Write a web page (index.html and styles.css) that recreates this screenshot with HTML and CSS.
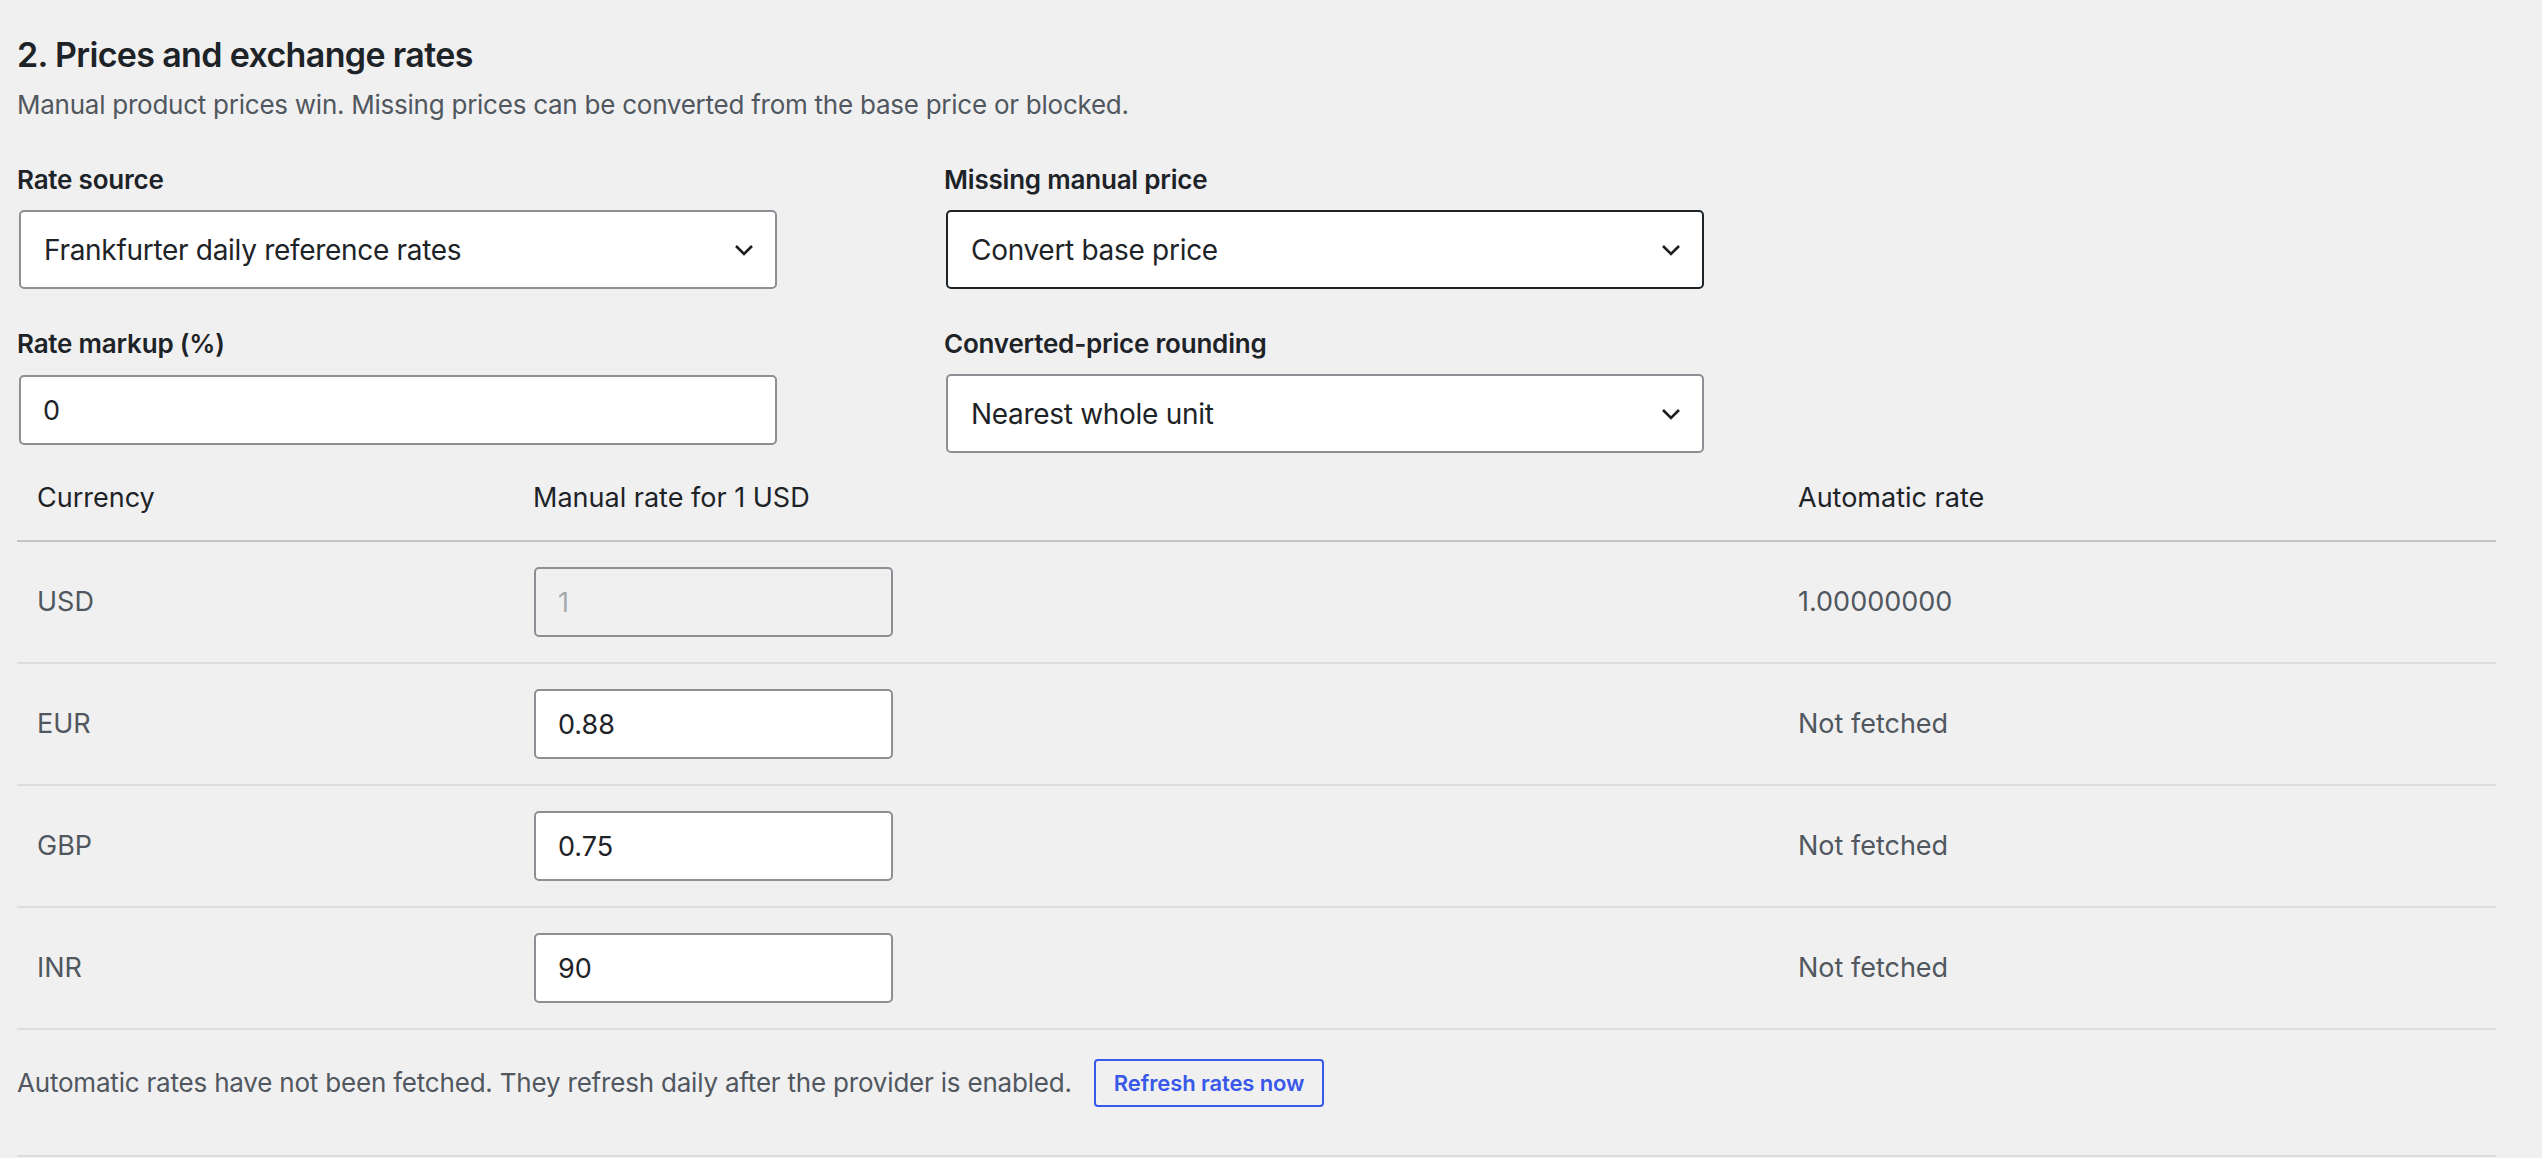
FILE: index.html
```html
<!DOCTYPE html>
<html lang="en">
<head>
<meta charset="utf-8">
<title>Prices and exchange rates</title>
<link rel="stylesheet" href="styles.css">
</head>
<body>
<div class="page">
  <h2 class="title">2. Prices and exchange rates</h2>
  <p class="desc">Manual product prices win. Missing prices can be converted from the base price or blocked.</p>

  <div class="fields">
    <div class="field">
      <label class="label">Rate source</label>
      <div class="select">
        <span class="select-value">Frankfurter daily reference rates</span>
        <svg class="chev" width="20" height="12" viewBox="0 0 20 12"><path d="M2 2 L10 10 L18 2" fill="none" stroke="#1e1e1e" stroke-width="2.6"/></svg>
      </div>
    </div>
    <div class="field">
      <label class="label">Missing manual price</label>
      <div class="select select-active">
        <span class="select-value">Convert base price</span>
        <svg class="chev" width="20" height="12" viewBox="0 0 20 12"><path d="M2 2 L10 10 L18 2" fill="none" stroke="#1e1e1e" stroke-width="2.6"/></svg>
      </div>
    </div>
    <div class="field">
      <label class="label">Rate markup (%)</label>
      <input class="input input-wide" type="text" value="0">
    </div>
    <div class="field">
      <label class="label">Converted-price rounding</label>
      <div class="select">
        <span class="select-value">Nearest whole unit</span>
        <svg class="chev" width="20" height="12" viewBox="0 0 20 12"><path d="M2 2 L10 10 L18 2" fill="none" stroke="#1e1e1e" stroke-width="2.6"/></svg>
      </div>
    </div>
  </div>

  <table class="rates">
    <thead>
      <tr>
        <th class="c1">Currency</th>
        <th class="c2">Manual rate for 1 USD</th>
        <th class="c3">Automatic rate</th>
      </tr>
    </thead>
    <tbody>
      <tr>
        <td>USD</td>
        <td><input class="input input-rate" type="text" value="1" disabled></td>
        <td>1.00000000</td>
      </tr>
      <tr>
        <td>EUR</td>
        <td><input class="input input-rate" type="text" value="0.88"></td>
        <td>Not fetched</td>
      </tr>
      <tr>
        <td>GBP</td>
        <td><input class="input input-rate" type="text" value="0.75"></td>
        <td>Not fetched</td>
      </tr>
      <tr>
        <td>INR</td>
        <td><input class="input input-rate" type="text" value="90"></td>
        <td>Not fetched</td>
      </tr>
    </tbody>
  </table>

  <div class="footer">
    <span class="footer-text">Automatic rates have not been fetched. They refresh daily after the provider is enabled.</span>
    <button class="btn" type="button">Refresh rates now</button>
  </div>
</div>
</body>
</html>
```

FILE: styles.css
```css
html, body {
  margin: 0;
  padding: 0;
  background: #f0f0f1;
}

body {
  font-family: Inter, "Noto Sans", sans-serif;
  color: #1d2327;
}

.page {
  padding: 33px 46px 0 17px;
}

.title {
  margin: 0;
  font-size: 34px;
  line-height: 44px;
  font-weight: 600;
  letter-spacing: -0.65px;
  color: #1d2327;
}

.desc {
  margin: 10px 0 0;
  font-size: 26px;
  line-height: 36px;
  letter-spacing: -0.25px;
  color: #50575e;
}

.fields {
  display: grid;
  grid-template-columns: 762px 762px;
  column-gap: 165px;
  row-gap: 37px;
  margin-top: 39px;
}

.field {
  display: flex;
  flex-direction: column;
}

.label {
  font-size: 26px;
  line-height: 36px;
  font-weight: 600;
  letter-spacing: -0.2px;
  color: #1d2327;
  margin-bottom: 12px;
}

.select {
  box-sizing: border-box;
  width: 758px;
  height: 79px;
  margin-left: 2px;
  background: #fff;
  border: 2px solid #8c8f94;
  border-radius: 5px;
  display: flex;
  align-items: center;
  justify-content: space-between;
  padding: 0 21px 0 23px;
}

.select-active {
  border-color: #1d2327;
}

.select-value {
  font-size: 28px;
  letter-spacing: -0.3px;
  color: #1d2327;
}

.chev {
  display: block;
}

.input {
  box-sizing: border-box;
  height: 70px;
  background: #fff;
  border: 2px solid #8c8f94;
  border-radius: 5px;
  padding: 0 22px;
  font-family: Inter, "Noto Sans", sans-serif;
  font-size: 27px;
  color: #1d2327;
  outline: none;
}

.input-wide {
  width: 758px;
  margin-left: 2px;
  margin-top: 1px;
}

.input-rate {
  width: 359px;
  margin-left: 1px;
  display: block;
}

.input:disabled {
  background: #f0f0f1;
  color: #a7aaad;
  border-color: #8c8f94;
}

.rates {
  width: 2479px;
  border-collapse: collapse;
  margin-top: 3px;
  table-layout: fixed;
}

.rates th {
  text-align: left;
  font-weight: 400;
  font-size: 27px;
  line-height: 36px;
  color: #1d2327;
  padding: 24px 20px;
  border-bottom: 2px solid #c3c4c7;
}

.rates .c1 { width: 456px; }
.rates .c2 { width: 1225px; }
.rates .c3 { width: 678px; }

.rates td {
  font-size: 27px;
  line-height: 36px;
  color: #50575e;
  padding: 25px 20px;
  height: 70px;
  border-bottom: 2px solid #dcdcde;
  vertical-align: middle;
}

.footer {
  display: flex;
  align-items: center;
  gap: 22px;
  padding: 29px 0 48px;
  border-bottom: 2px solid #dcdcde;
}

.footer-text {
  font-size: 26px;
  line-height: 36px;
  letter-spacing: -0.2px;
  color: #50575e;
}

.btn {
  box-sizing: border-box;
  height: 48px;
  padding: 0 18px;
  background: transparent;
  border: 2px solid #3858e9;
  border-radius: 4px;
  color: #3858e9;
  font-family: Inter, "Noto Sans", sans-serif;
  font-size: 22px;
  font-weight: 600;
  letter-spacing: -0.1px;
  cursor: pointer;
}
```
